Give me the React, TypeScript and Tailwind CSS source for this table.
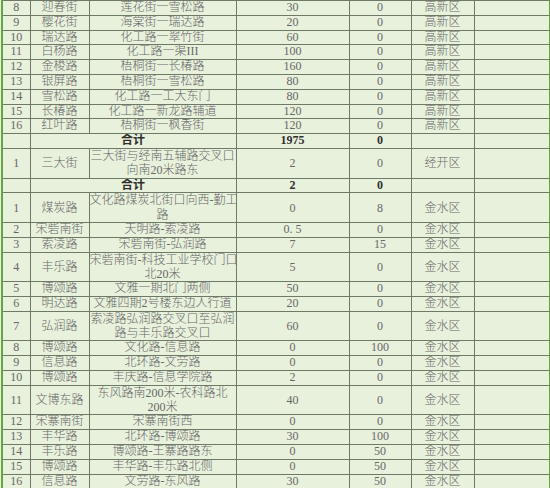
import React from "react";

type Row = {
  no?: string;
  road?: string;
  range?: string[];
  a: string;
  b: string;
  area?: string;
  total?: boolean;
};

const GX = "高新区";
const JS = "金水区";

const ROWS: Row[] = [
  { no: "8", road: "迎春街", range: ["莲花街一雪松路"], a: "30", b: "0", area: GX },
  { no: "9", road: "樱花街", range: ["海棠街一瑞达路"], a: "20", b: "0", area: GX },
  { no: "10", road: "瑞达路", range: ["化工路一翠竹街"], a: "60", b: "0", area: GX },
  { no: "11", road: "白杨路", range: ["化工路一渠III"], a: "100", b: "0", area: GX },
  { no: "12", road: "金梭路", range: ["梧桐街一长椿路"], a: "160", b: "0", area: GX },
  { no: "13", road: "银屏路", range: ["梧桐街一雪松路"], a: "80", b: "0", area: GX },
  { no: "14", road: "雪松路", range: ["化工路一工大东门"], a: "80", b: "0", area: GX },
  { no: "15", road: "长椿路", range: ["化工路一新龙路辅道"], a: "120", b: "0", area: GX },
  { no: "16", road: "红叶路", range: ["梧桐街一枫香街"], a: "120", b: "0", area: GX },
  { total: true, a: "1975", b: "0" },
  { no: "1", road: "三大街", range: ["三大街与经南五辅路交叉口", "向南20米路东"], a: "2", b: "0", area: "经开区" },
  { total: true, a: "2", b: "0" },
  { no: "1", road: "煤炭路", range: ["文化路煤炭北街口向西-勤工", "路"], a: "0", b: "8", area: JS },
  { no: "2", road: "宋砦南街", range: ["天明路-索凌路"], a: "0. 5", b: "0", area: JS },
  { no: "3", road: "索凌路", range: ["宋砦南街-弘润路"], a: "7", b: "15", area: JS },
  { no: "4", road: "丰乐路", range: ["宋砦南街-科技工业学校门口", "北20米"], a: "5", b: "0", area: JS },
  { no: "5", road: "博颂路", range: ["文雅一期北门两侧"], a: "50", b: "0", area: JS },
  { no: "6", road: "明达路", range: ["文雅四期2号楼东边人行道"], a: "20", b: "0", area: JS },
  { no: "7", road: "弘润路", range: ["索凌路弘润路交叉口至弘润", "路与丰乐路交叉口"], a: "60", b: "0", area: JS },
  { no: "8", road: "博颂路", range: ["文化路-信息路"], a: "0", b: "100", area: JS },
  { no: "9", road: "信息路", range: ["北环路-文劳路"], a: "0", b: "0", area: JS },
  { no: "10", road: "博颂路", range: ["丰庆路-信息学院路"], a: "2", b: "0", area: JS },
  { no: "11", road: "文博东路", range: ["东风路南200米-农科路北", "200米"], a: "40", b: "0", area: JS },
  { no: "12", road: "宋寨南街", range: ["宋寨南街西"], a: "0", b: "0", area: JS },
  { no: "13", road: "丰华路", range: ["北环路-博颂路"], a: "30", b: "100", area: JS },
  { no: "14", road: "丰乐路", range: ["博颂路-王寨路路东"], a: "0", b: "50", area: JS },
  { no: "15", road: "博颂路", range: ["丰华路-丰乐路北侧"], a: "0", b: "50", area: JS },
  { no: "16", road: "信息路", range: ["文劳路-东风路"], a: "30", b: "50", area: JS },
];

const cell = "border border-[#6f7a66] p-0 text-center align-middle whitespace-nowrap overflow-hidden";
const bold = " font-bold text-[#2f2f2f]";

export default function App() {
  return (
    <div
      className="w-[550px] h-[488px] overflow-hidden bg-[#e8f1dc] text-[12px] text-[#676767] font-light"
      style={{ fontFamily: '"Liberation Serif", "Noto Sans CJK SC", serif' }}
    >
      <table className="table-fixed border-collapse ml-px w-[548px]">
        <colgroup>
          <col className="w-[28px]" />
          <col className="w-[59px]" />
          <col className="w-[147px]" />
          <col className="w-[113px]" />
          <col className="w-[62px]" />
          <col className="w-[63px]" />
          <col className="w-[76px]" />
        </colgroup>
        <tbody>
          {ROWS.map((r, i) => {
            const tall = r.range && r.range.length > 1;
            const h = tall ? "h-[29.6px] leading-[14.3px]" : "h-[14.8px] leading-[13.8px]";
            if (r.total) {
              return (
                <tr key={i} className={h}>
                  <td className={cell + " border-l-2 border-l-[#63a443]"} />
                  <td colSpan={2} className={cell + bold}>合计</td>
                  <td className={cell + bold}>{r.a}</td>
                  <td className={cell + bold}>{r.b}</td>
                  <td className={cell} />
                  <td className={cell + " border-r-2 border-r-[#63a443]"} />
                </tr>
              );
            }
            return (
              <tr key={i} className={h}>
                <td className={cell + " border-l-2 border-l-[#63a443]"}>{r.no}</td>
                <td className={cell}>{r.road}</td>
                <td className={cell}>
                  {r.range!.map((t, j) => (
                    <div key={j}>{t}</div>
                  ))}
                </td>
                <td className={cell}>{r.a}</td>
                <td className={cell}>{r.b}</td>
                <td className={cell}>{r.area}</td>
                <td className={cell + " border-r-2 border-r-[#63a443]"} />
              </tr>
            );
          })}
        </tbody>
      </table>
    </div>
  );
}
